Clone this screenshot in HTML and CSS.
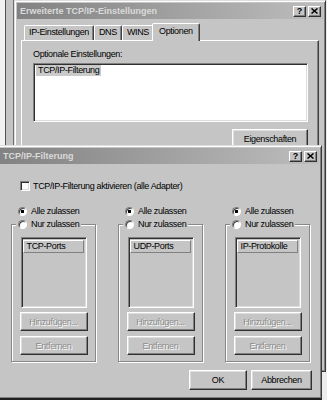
FILE: index.html
```html
<!DOCTYPE html>
<html lang="de">
<head>
    <meta charset="UTF-8">
    <meta name="viewport" content="width=device-width, initial-scale=1.0">
    <title>TCP/IP-Filterung</title>
    <link rel="stylesheet" href="styles.css">
</head>
<body>

    <div class="desktop">
        <!-- Fenster im Hintergrund, nur der Rand ist sichtbar -->
        <div class="backwin"><div class="backlist"></div></div>

        <div class="window win-top">
            <div class="titlebar">
                <span class="title">Erweiterte TCP/IP-Einstellungen</span>
                <span class="tbtn">?</span>
                <span class="tbtn"><svg width="7" height="6" viewBox="0 0 7 6"><path d="M0.5 0.5L6.5 5.5M6.5 0.5L0.5 5.5" stroke="#000" stroke-width="1.5"/></svg></span>
            </div>
            <div class="tabs">
                <div class="tab">IP-Einstellungen</div>
                <div class="tab">DNS</div>
                <div class="tab">WINS</div>
                <div class="tab active">Optionen</div>
            </div>
            <div class="tabpanel">
                <div class="label">Optionale Einstellungen:</div>
                <div class="options-list sunken">
                    <span class="item">TCP/IP-Filterung</span>
                </div>
                <div class="props-row">
                    <button class="btn btn-props">Eigenschaften</button>
                </div>
            </div>
        </div>

        <div class="window win-filter">
            <div class="titlebar">
                <span class="title">TCP/IP-Filterung</span>
                <span class="tbtn">?</span>
                <span class="tbtn"><svg width="7" height="6" viewBox="0 0 7 6"><path d="M0.5 0.5L6.5 5.5M6.5 0.5L0.5 5.5" stroke="#000" stroke-width="1.5"/></svg></span>
            </div>
            <div class="filter-body">
                <div class="check-row">
                    <span class="checkbox sunken"></span>
                    <span>TCP/IP-Filterung aktivieren (alle Adapter)</span>
                </div>

                <div class="columns">
                    <div class="col">
                        <div class="radio-row first"><span class="radio on"></span>Alle zulassen</div>
                        <fieldset class="group">
                            <legend><span class="radio-row"><span class="radio"></span>Nur zulassen</span></legend>
                            <div class="plist sunken"><div class="plist-head">TCP-Ports</div></div>
                            <button class="btn btn-dis btn-add">Hinzufügen...</button>
                            <button class="btn btn-dis">Entfernen</button>
                        </fieldset>
                    </div>
                    <div class="col">
                        <div class="radio-row first"><span class="radio on"></span>Alle zulassen</div>
                        <fieldset class="group">
                            <legend><span class="radio-row"><span class="radio"></span>Nur zulassen</span></legend>
                            <div class="plist sunken"><div class="plist-head">UDP-Ports</div></div>
                            <button class="btn btn-dis btn-add">Hinzufügen...</button>
                            <button class="btn btn-dis">Entfernen</button>
                        </fieldset>
                    </div>
                    <div class="col">
                        <div class="radio-row first"><span class="radio on"></span>Alle zulassen</div>
                        <fieldset class="group">
                            <legend><span class="radio-row"><span class="radio"></span>Nur zulassen</span></legend>
                            <div class="plist sunken"><div class="plist-head">IP-Protokolle</div></div>
                            <button class="btn btn-dis btn-add">Hinzufügen...</button>
                            <button class="btn btn-dis">Entfernen</button>
                        </fieldset>
                    </div>
                </div>

                <div class="footer">
                    <button class="btn btn-ok">OK</button>
                    <button class="btn btn-cancel">Abbrechen</button>
                </div>
            </div>
        </div>
    </div>

</body>
</html>
```

FILE: styles.css
```css
* {
    box-sizing: border-box;
}

body {
    margin: 0;
    font-family: "Liberation Sans", Arial, sans-serif;
    font-size: 9px;
    letter-spacing: -0.35px;
    color: #000;
}

.desktop {
    position: relative;
    width: 327px;
    height: 400px;
    overflow: hidden;
    background: #ececec;
}

/* Hintergrundfenster links */
.backwin {
    position: absolute;
    left: -100px;
    top: -3px;
    width: 114px;
    height: 152px;
    display: flex;
    padding-right: 7px;
    background: #c5c5c5;
    border-right: 1px solid #6e6e6e;
}

.backlist {
    flex: 1;
    background: #f2f2f2;
    border-right: 1px solid #555;
}

/* Fensterrahmen */
.window {
    position: absolute;
    display: flex;
    flex-direction: column;
    padding: 2px;
    background: #c5c5c5;
    border: 1px solid;
    border-color: #dedede #3a3a3a #3a3a3a #dedede;
    box-shadow: inset 1px 1px #fff, inset -1px -1px #808080;
}

.win-top {
    left: 14px;
    top: 0;
    width: 312px;
    height: 372px;
}

.win-filter {
    left: -3px;
    top: 145px;
    width: 325px;
    height: 255px;
    border-bottom: 2px solid #1e1e1e;
}

.titlebar {
    height: 16px;
    display: flex;
    align-items: center;
    padding: 0 2px 0 3px;
    background: linear-gradient(to right, #828282, #bdbdbd);
    color: #dadada;
    font-weight: bold;
    letter-spacing: 0;
}

.title {
    flex: 1;
    white-space: nowrap;
}

.tbtn {
    width: 13px;
    height: 11px;
    margin-left: 2px;
    display: flex;
    align-items: center;
    justify-content: center;
    background: #c5c5c5;
    border: 1px solid;
    border-color: #fff #303030 #303030 #fff;
    box-shadow: inset -1px -1px #808080;
    color: #000;
    font-size: 9px;
    line-height: 9px;
}

/* Registerkarten */
.tabs {
    position: relative;
    z-index: 1;
    display: flex;
    align-items: flex-end;
    height: 18px;
    margin: 3px 4px 0;
    padding-left: 3px;
}

.tab {
    height: 15px;
    padding: 0 4px;
    line-height: 13px;
    white-space: nowrap;
    border: 1px solid;
    border-bottom: none;
    border-color: #fff #404040 transparent #fff;
    border-radius: 2px 2px 0 0;
    box-shadow: inset -1px 0 #808080;
}

.tab.active {
    height: 18px;
    margin: 0 -2px -1px;
    padding: 0 6px;
    line-height: 15px;
    background: #c5c5c5;
}

.tabpanel {
    flex: 1;
    margin: 0 4px;
    padding: 8px 10px 0 11px;
    border: 1px solid;
    border-color: #fff #404040 #404040 #fff;
    box-shadow: inset -1px -1px #808080;
}

.label {
    height: 10px;
    line-height: 10px;
}

.sunken {
    border: 1px solid;
    border-color: #808080 #fff #fff #808080;
    box-shadow: inset 1px 1px #303030, inset -1px -1px #dcdcdc;
}

.options-list {
    height: 59px;
    margin-top: 4px;
    padding: 1px 2px;
    background: #fff;
}

.item {
    display: inline-block;
    padding: 0 2px;
    line-height: 11px;
    background: #cacaca;
}

.props-row {
    display: flex;
    justify-content: flex-end;
    margin-top: 7px;
}

.btn {
    height: 19px;
    padding: 0;
    font: inherit;
    letter-spacing: inherit;
    color: #000;
    background: #c5c5c5;
    border: 1px solid;
    border-color: #fff #303030 #303030 #fff;
    box-shadow: inset -1px -1px #808080, inset 1px 1px #dedede;
}

.btn-props {
    width: 76px;
}

/* Dialog TCP/IP-Filterung */
.filter-body {
    flex: 1;
    display: flex;
    flex-direction: column;
    padding-top: 17px;
}

.check-row {
    display: flex;
    align-items: center;
    gap: 3px;
    height: 10px;
    margin-left: 20px;
}

.checkbox {
    width: 10px;
    height: 10px;
    background: #fff;
}

.columns {
    display: flex;
    gap: 22px;
    margin: 15px 0 0 11px;
}

.col {
    width: 85px;
}

.radio-row {
    display: flex;
    align-items: center;
    gap: 4px;
    height: 10px;
    white-space: nowrap;
}

.radio-row.first {
    margin-left: 7px;
}

.radio {
    width: 9px;
    height: 9px;
    border-radius: 50%;
    background: #fff;
    border: 1px solid;
    border-color: #808080 #fff #fff #808080;
    box-shadow: inset 1px 1px #404040;
}

.radio.on {
    background: radial-gradient(circle, #000 0 1.4px, #fff 1.9px);
}

.group {
    width: 85px;
    margin: 3px 0 0;
    padding: 0 4px 6px;
    display: flex;
    flex-direction: column;
    align-items: center;
    border: 1px solid #888;
    box-shadow: 1px 1px 0 #fff, inset 1px 1px 0 #fff;
}

.group legend {
    padding: 0 2px;
    background: #c5c5c5;
}

.plist {
    width: 66px;
    height: 71px;
    margin-top: 8px;
    padding: 2px 2px 0 1px;
}

.plist-head {
    height: 13px;
    padding-left: 3px;
    line-height: 11px;
    border: 1px solid;
    border-color: #fff #808080 #808080 #fff;
    white-space: nowrap;
}

.btn-dis {
    width: 68px;
    margin-top: 5px;
    color: #8c8c8c;
    text-shadow: 1px 1px 0 #fff;
}

.btn-add {
    margin-top: 4px;
}

.footer {
    display: flex;
    justify-content: flex-end;
    gap: 4px;
    margin: 8px 7px 0 0;
}

.footer .btn {
    height: 20px;
}

.btn-ok {
    width: 58px;
}

.btn-cancel {
    width: 61px;
}
```
